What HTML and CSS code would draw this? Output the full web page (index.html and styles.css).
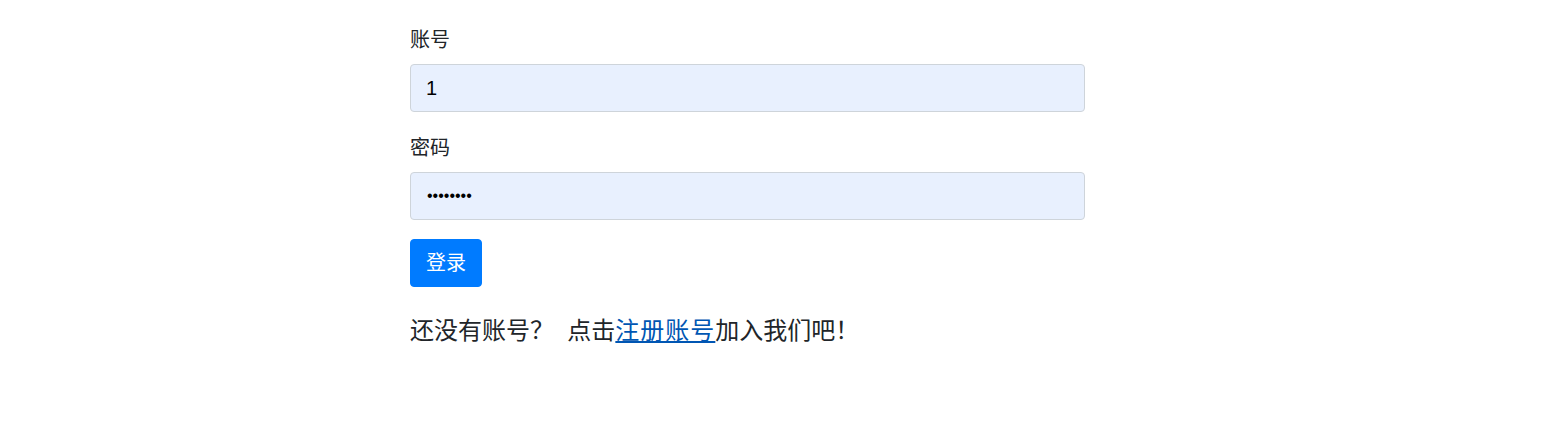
FILE: index.html
```html
<!DOCTYPE html>
<html lang="zh-CN">
<head>
<meta charset="utf-8">
<title>登录</title>
<link rel="stylesheet" href="styles.css">
</head>
<body>
<div class="page">
  <form class="login-form">
    <div class="form-group">
      <label class="form-label">账号</label>
      <input class="form-control" type="text" value="1">
    </div>
    <div class="form-group form-group-last">
      <label class="form-label">密码</label>
      <input class="form-control form-control-pw" type="password" value="12345678">
    </div>
    <button type="button" class="btn-login">登录</button>
    <h4 class="register-tip">还没有账号？&nbsp;&nbsp;点击<a href="#" class="register-link">注册账号</a>加入我们吧！</h4>
  </form>
</div>
</body>
</html>
```

FILE: styles.css
```css
html, body {
  margin: 0;
  padding: 0;
  background: #fff;
}
body {
  font-family: "Liberation Sans", "Noto Sans CJK SC", sans-serif;
  font-size: 16px;
  line-height: 1.5;
  color: #212529;
}
.page {
  padding: 25px 0 0 410px;
}
.login-form {
  width: 675px;
  display: flex;
  flex-direction: column;
  align-items: flex-start;
}
.form-group {
  width: 100%;
  display: flex;
  flex-direction: column;
  margin-bottom: 21px;
}
.form-group-last {
  margin-bottom: 19px;
}
.form-label {
  display: block;
  font-size: 20px;
  line-height: 30px;
  margin-bottom: 9px;
}
.form-control {
  box-sizing: border-box;
  width: 100%;
  height: 48px;
  padding: 0 15px;
  font-family: "Liberation Sans", "Noto Sans CJK SC", sans-serif;
  font-size: 20px;
  color: #000;
  background: #e8f0fe;
  border: 1px solid #ced4da;
  border-radius: 4px;
  outline: none;
}
.form-control-pw {
  font-size: 16px;
  padding: 0 16px;
}
.btn-login {
  box-sizing: border-box;
  height: 48px;
  padding: 0 15px;
  font-family: "Liberation Sans", "Noto Sans CJK SC", sans-serif;
  font-size: 20px;
  line-height: 1;
  color: #fff;
  background: #007bff;
  border: 1px solid #007bff;
  border-radius: 4px;
  cursor: pointer;
}
.register-tip {
  margin: 30px 0 0;
  font-size: 24px;
  font-weight: 400;
  line-height: 1.2;
  color: #212529;
}
.register-link {
  color: #0056b3;
  text-decoration: underline;
  letter-spacing: 1px;
}
```
